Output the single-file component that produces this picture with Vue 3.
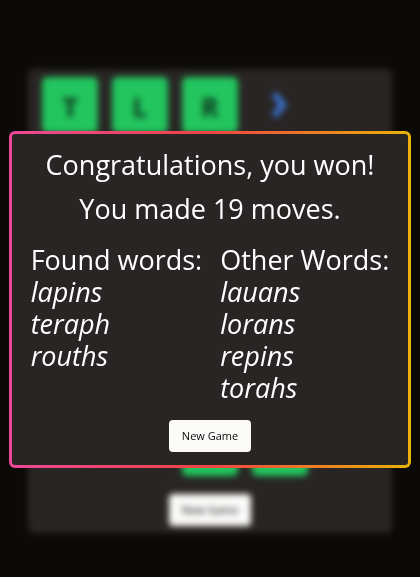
<script setup>
const topRow = ['T', 'L', 'R']
const bottomRow = [false, false, true, true, false]
const moves = 19
const found = ['lapins', 'teraph', 'rouths']
const others = ['lauans', 'lorans', 'repins', 'torahs']
</script>

<template>
  <div class="page">
    <main class="board" inert>
      <div class="row">
        <span v-for="letter in topRow" :key="letter" class="tile">{{ letter }}</span>
        <span class="arrow">
          <svg viewBox="0 0 24 28" width="24" height="28" aria-hidden="true">
            <path d="M6 3 L15 14 L6 25" fill="none" stroke="#3b76d6" stroke-width="6" />
          </svg>
        </span>
        <span></span>
      </div>
      <div class="row">
        <span v-for="(filled, i) in bottomRow" :key="i" :class="{ tile: filled }"></span>
      </div>
      <button type="button" class="button">New Game</button>
    </main>

    <div class="overlay">
      <section class="dialog" role="dialog" aria-modal="true" aria-labelledby="title">
        <h1 id="title" class="headline">Congratulations, you won!</h1>
        <p class="headline">You made {{ moves }} moves.</p>
        <div class="words">
          <div>
            <h2>Found words:</h2>
            <ul>
              <li v-for="word in found" :key="word">{{ word }}</li>
            </ul>
          </div>
          <div>
            <h2>Other Words:</h2>
            <ul>
              <li v-for="word in others" :key="word">{{ word }}</li>
            </ul>
          </div>
        </div>
        <button type="button" class="button">New Game</button>
      </section>
    </div>
  </div>
</template>

<style>
body {
  background: #0c0a09;
}
</style>

<style scoped>
.page {
  box-sizing: border-box;
  min-height: 100vh;
  padding: 69px 28px 44px;
  display: flex;
  flex-direction: column;
  background: #0c0a09;
  color: #fff;
  font-family: "Segoe UI", "Open Sans", "Noto Sans", sans-serif;
}

.board {
  box-sizing: border-box;
  flex: 1;
  width: 100%;
  max-width: 364px;
  margin: 0 auto;
  padding: 8px 14px 7px;
  display: flex;
  flex-direction: column;
  align-items: center;
  border-radius: 6px;
  background: #292524;
}

.row {
  width: 100%;
  display: grid;
  grid-template-columns: repeat(5, 1fr);
  gap: 14px;
}

.row + .row {
  margin: auto 0 18px;
}

.tile,
.arrow {
  height: 56px;
  display: flex;
  align-items: center;
  justify-content: center;
}

.tile {
  padding-top: 2px;
  box-sizing: border-box;
  border-radius: 5px;
  background: #22c55e;
  color: #0f3a20;
  font-size: 27px;
  font-weight: 700;
}

.button {
  height: 32px;
  padding: 0 13px;
  border: 0;
  border-radius: 4px;
  background: #fafaf9;
  color: #0c0a09;
  font: 500 11px/16px "Segoe UI", "Open Sans", "Noto Sans", sans-serif;
}

.overlay {
  position: fixed;
  inset: 0;
  padding: 131px 9px 0;
  backdrop-filter: blur(3px);
}

.dialog {
  box-sizing: border-box;
  width: 100%;
  max-width: 402px;
  margin: 0 auto;
  padding: 13px 12px;
  display: flex;
  flex-direction: column;
  align-items: center;
  border: 3px solid transparent;
  border-radius: 6px;
  background:
    linear-gradient(#292524, #292524) padding-box,
    linear-gradient(to right, #ec4899, #ef4444, #eab308) border-box;
}

.headline {
  margin: 0 0 8px;
  font-size: 27px;
  font-weight: 400;
  line-height: 36px;
}

.words {
  display: grid;
  grid-template-columns: repeat(2, max-content);
  gap: 18px;
  margin: 9px 0 16px;
  font-size: 27px;
  line-height: 32px;
}

h2 {
  margin: 0;
  font-size: inherit;
  font-weight: 400;
}

ul {
  margin: 0;
  padding: 0;
  list-style: none;
  font-style: italic;
}
</style>
